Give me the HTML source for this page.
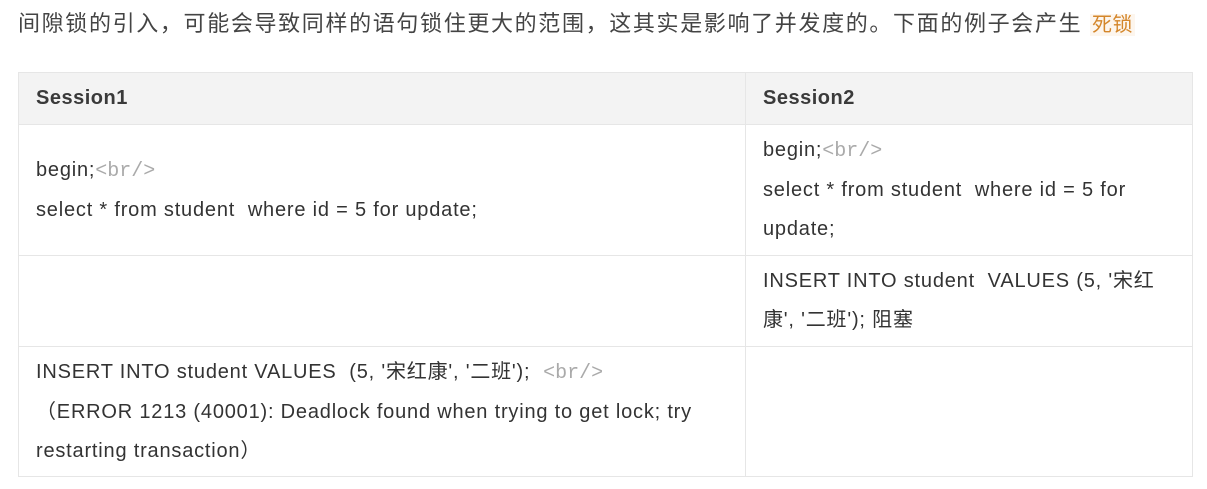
<!DOCTYPE html>
<html><head><meta charset="utf-8"><style>
body{margin:0;background:#fff;width:1207px;height:489px;overflow:hidden;font-family:"Liberation Sans","Noto Sans CJK SC",sans-serif;color:#333;}
.p{position:absolute;left:18px;top:6px;font-size:22px;color:#444;white-space:nowrap;letter-spacing:1.65px}
.p span{color:#d4862a;background:#fdf6ee;font-size:20px;padding:0 2px;letter-spacing:0.5px}
table{position:absolute;left:18px;top:72px;border-collapse:collapse;width:1175px;font-size:20px;letter-spacing:0.8px}
td,th{border:1px solid #e6e6e6;padding:0 17px;vertical-align:middle;line-height:39px;text-align:left}
th{background:#f3f3f3;height:51px;font-weight:bold;color:#3a3a3a;letter-spacing:0.5px}
.g{color:#aaa;font-family:"Liberation Mono",monospace;font-size:20px;letter-spacing:0}
</style></head><body>
<div class="p">间隙锁的引入，可能会导致同样的语句锁住更大的范围，这其实是影响了并发度的。下面的例子会产生 <span>死锁</span></div>
<table>
<tr><th style="width:692px">Session1</th><th>Session2</th></tr>
<tr style="height:131px"><td>begin;<span class="g">&lt;br/&gt;</span><br>select * from student&nbsp; where id = 5 for update;</td><td>begin;<span class="g">&lt;br/&gt;</span><br>select * from student&nbsp; where id = 5 for update;</td></tr>
<tr style="height:91px"><td></td><td>INSERT INTO student&nbsp; VALUES (5, '宋红康', '二班'); 阻塞</td></tr>
<tr style="height:130px"><td>INSERT INTO student VALUES&nbsp; (5, '宋红康', '二班');&nbsp; <span class="g">&lt;br/&gt;</span><br>（ERROR 1213 (40001): Deadlock found when trying to get lock; try restarting transaction）</td><td></td></tr>
</table>
</body></html>
